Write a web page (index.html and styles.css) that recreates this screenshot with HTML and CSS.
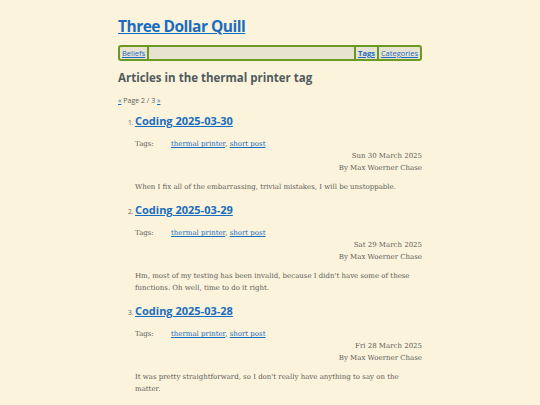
FILE: index.html
```html
<!DOCTYPE html>
<html lang="en">

<head>
  <meta charset="UTF-8">
  <meta name="viewport" content="width=device-width, initial-scale=1.0">
  <title>Three Dollar Quill - thermal printer</title>
  <link rel="stylesheet" href="styles.css">
</head>

<body>
  <div class="page">
    <header>
      <h1 class="site-title"><a href="#">Three Dollar Quill</a></h1>
      <nav class="nav-bar">
        <a href="#" class="nav-item">Beliefs</a>
        <span class="nav-spacer"></span>
        <a href="#" class="nav-item current">Tags</a>
        <a href="#" class="nav-item">Categories</a>
      </nav>
    </header>

    <main>
      <h2 class="list-title">Articles in the thermal printer tag</h2>
      <p class="pager"><a href="#">&laquo;</a> Page 2 / 3 <a href="#">&raquo;</a></p>

      <ol class="articles">
        <li class="article">
          <h3 class="article-title"><a href="#">Coding 2025-03-30</a></h3>
          <div class="meta">
            <div class="tags"><span class="tags-label">Tags:</span> <span><a href="#">thermal printer</a>, <a href="#">short post</a></span></div>
            <div class="byline">
              <time>Sun 30 March 2025</time>
              <span>By Max Woerner Chase</span>
            </div>
          </div>
          <p class="summary">When I fix all of the embarrassing, trivial mistakes, I will be unstoppable.</p>
        </li>
        <li class="article">
          <h3 class="article-title"><a href="#">Coding 2025-03-29</a></h3>
          <div class="meta">
            <div class="tags"><span class="tags-label">Tags:</span> <span><a href="#">thermal printer</a>, <a href="#">short post</a></span></div>
            <div class="byline">
              <time>Sat 29 March 2025</time>
              <span>By Max Woerner Chase</span>
            </div>
          </div>
          <p class="summary">Hm, most of my testing has been invalid, because I didn't have some of these functions. Oh well, time to do it right.</p>
        </li>
        <li class="article">
          <h3 class="article-title"><a href="#">Coding 2025-03-28</a></h3>
          <div class="meta">
            <div class="tags"><span class="tags-label">Tags:</span> <span><a href="#">thermal printer</a>, <a href="#">short post</a></span></div>
            <div class="byline">
              <time>Fri 28 March 2025</time>
              <span>By Max Woerner Chase</span>
            </div>
          </div>
          <p class="summary">It was pretty straightforward, so I don't really have anything to say on the matter.</p>
        </li>
      </ol>
    </main>
  </div>
</body>

</html>
```

FILE: styles.css
```css
* {
  margin: 0;
  padding: 0;
}

:root {
  --bg: #fbf3dc;
  --text: #5e5e5a;
  --link: #1a6cc0;
  --heading: #4f5b5e;
  --nav-border: #6a9a22;
  --nav-bg: #e8e3d1;
  --sans: "Open Sans", "Noto Sans", sans-serif;
  --serif: "DejaVu Serif", "Liberation Serif", serif;
}

body {
  background-color: var(--bg);
  color: var(--text);
  font-family: var(--serif);
  font-size: 7px;
}

a {
  color: var(--link);
}

.page {
  width: 304px;
  margin: 0 auto;
  padding-top: 14px;
}

.site-title {
  font-family: var(--sans);
  font-size: 15.5px;
  line-height: 24px;
  letter-spacing: -0.5px;
}

/* 导航条 */
.nav-bar {
  display: flex;
  align-items: stretch;
  margin-top: 7px;
  background: var(--nav-bg);
  border: 2px solid var(--nav-border);
  border-radius: 3px;
  font-family: var(--sans);
  font-size: 7.5px;
  line-height: 12px;
}

.nav-item {
  padding: 0 2px;
  border-right: 2px solid var(--nav-border);

  &:last-child {
    border-right: 0;
  }

  &.current {
    font-weight: bold;
    border-left: 2px solid var(--nav-border);
  }
}

.nav-spacer {
  flex: 1;
}

.list-title {
  font-family: var(--sans);
  font-size: 11.5px;
  color: var(--heading);
  margin-top: 9px;
  line-height: 16px;
}

.pager {
  font-family: var(--sans);
  font-size: 7px;
  margin-top: 10px;
  color: var(--text);
}

.articles {
  margin-top: 8px;
  padding-left: 17px;
  font-family: var(--sans);
  font-size: 6.5px;
}

.article {
  padding-bottom: 9px;
}

.article-title {
  font-size: 11px;
  line-height: 16px;
}

.meta {
  margin-top: 9px;
  font-family: var(--serif);
  font-size: 7px;
  line-height: 12px;
}

.tags {
  display: flex;

  & .tags-label {
    width: 36px;
  }
}

.byline {
  display: flex;
  flex-direction: column;
  align-items: flex-end;
}

.summary {
  margin-top: 7px;
  font-family: var(--serif);
  font-size: 7px;
  line-height: 12px;
}
```
